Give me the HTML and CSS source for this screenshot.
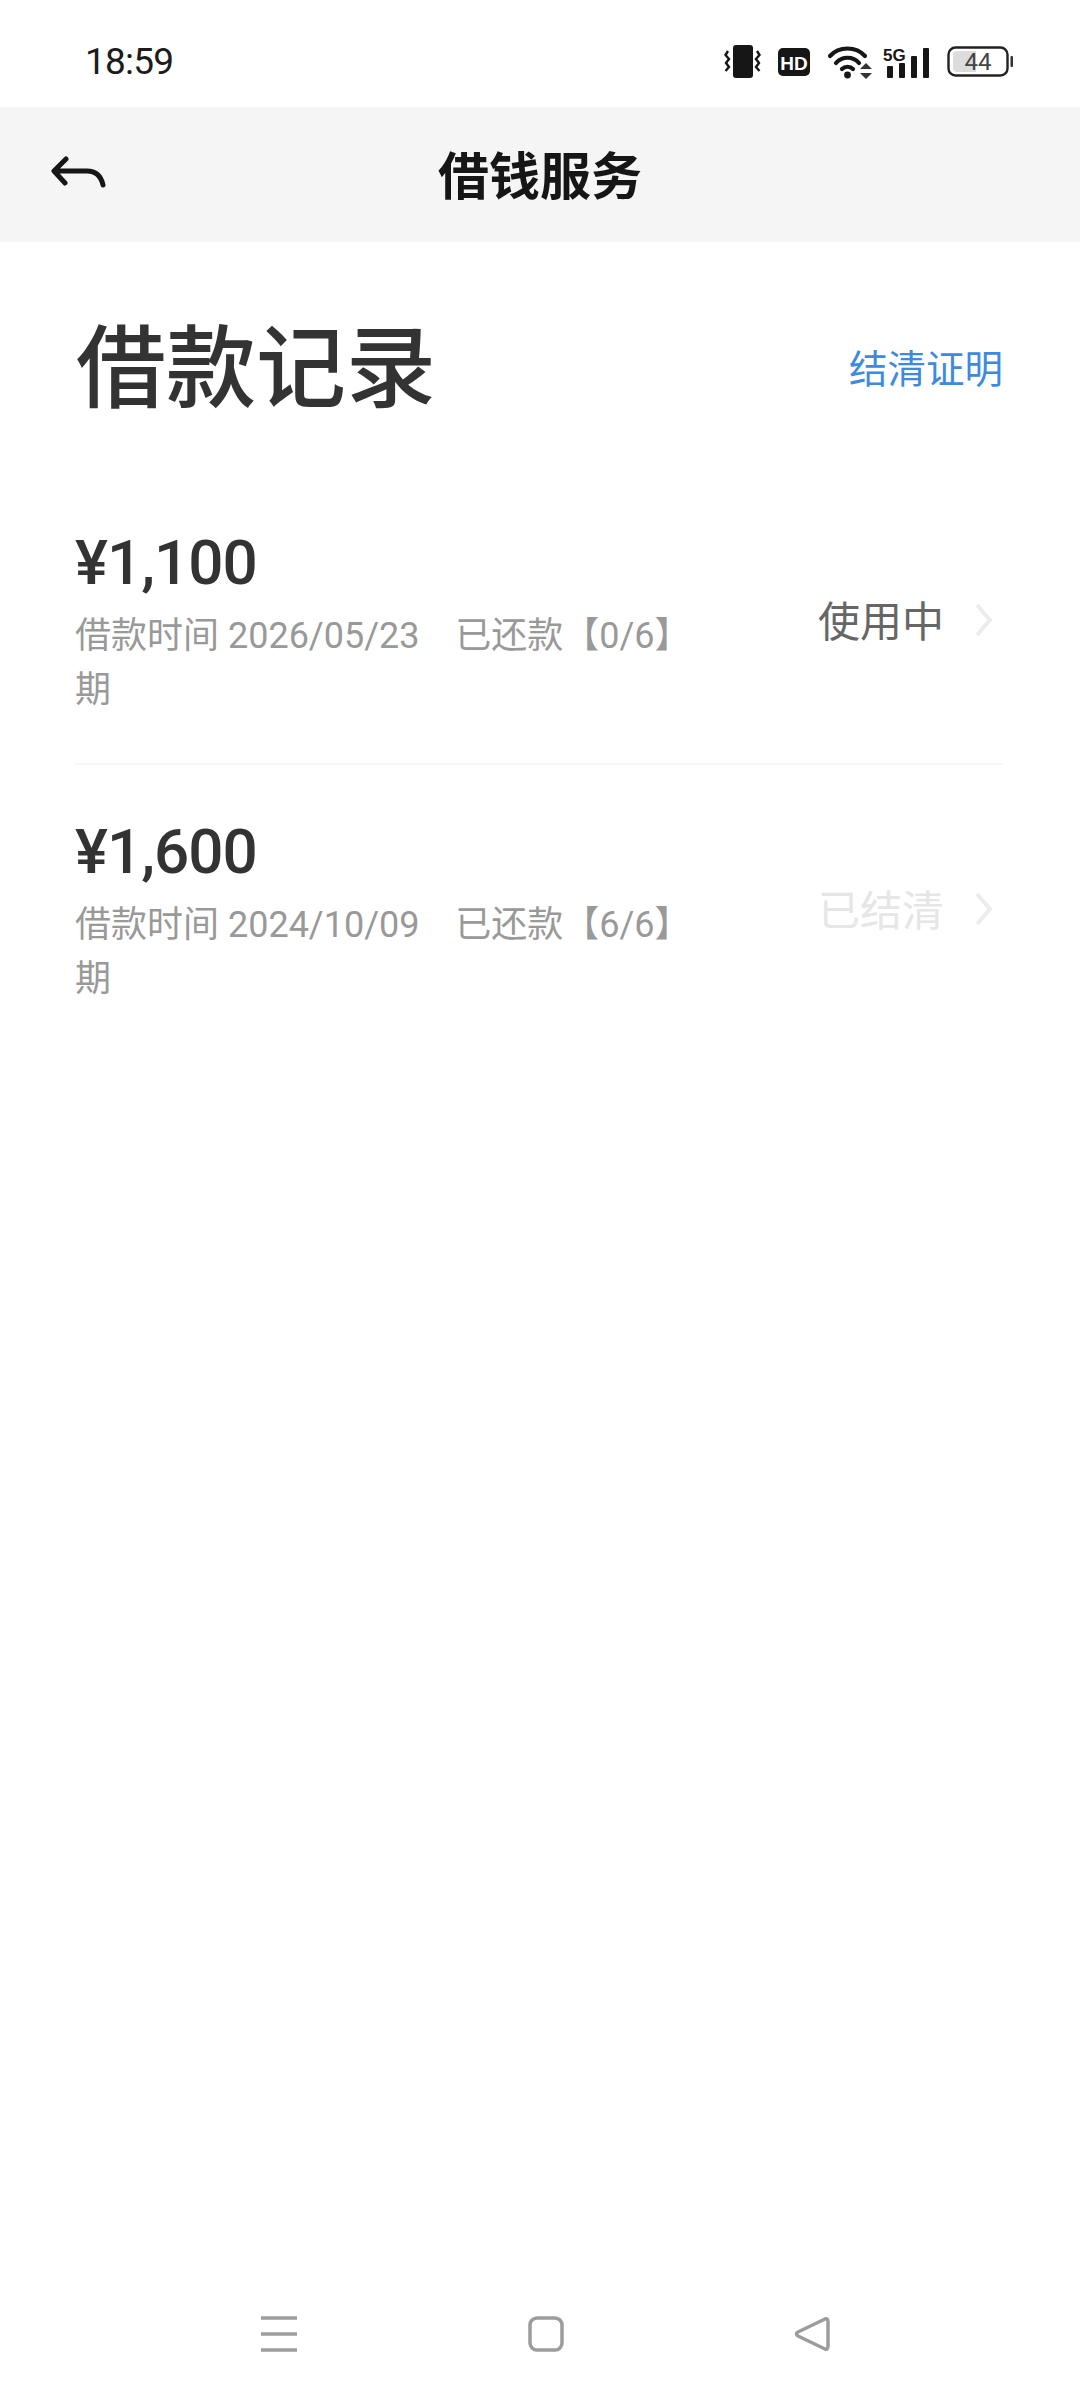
FILE: index.html
```html
<!DOCTYPE html>
<html lang="zh-CN">
<head>
<meta charset="utf-8">
<title>借款记录</title>
<link rel="stylesheet" href="styles.css">
</head>
<body>
<div class="page">
  <div class="status">
    <span class="time">18:59</span>
    <div class="status-icons">
      <svg class="ic-vib" width="37" height="34" viewBox="0 0 37 34"><rect x="9" y="0" width="20" height="33" rx="3" fill="#161616"/><path d="M4 6 L1.5 10 L5 14 L2 18 L5 22 L1.5 26 M33 6 L35.5 10 L32 14 L35 18 L32 22 L35.5 26" fill="none" stroke="#161616" stroke-width="2.4"/></svg>
      <svg class="ic-hd" width="32" height="28" viewBox="0 0 32 28"><rect width="32" height="28" rx="5" fill="#161616"/><text x="16" y="21.5" class="hd-text" text-anchor="middle">HD</text></svg>
      <svg class="ic-wifi" width="45" height="34" viewBox="0 0 45 34"><path d="M3 11 C12 1 29 1 38 11 M9 18 C15 11 26 11 32 18 M15 24 C18 21 23 21 26 24" fill="none" stroke="#161616" stroke-width="4.2" stroke-linecap="round"/><circle cx="20.5" cy="30" r="3.4" fill="#161616"/><path d="M33 24 L39 18 L45 24 Z M33 28 L45 28 L39 34 Z" fill="#333"/></svg>
      <svg class="ic-sig" width="47" height="32" viewBox="0 0 47 32"><text x="0" y="15" class="sig-text">5G</text><rect x="4" y="20" width="6" height="12" rx="1" fill="#161616"/><rect x="16" y="17" width="6" height="15" rx="1" fill="#161616"/><rect x="28" y="10" width="6" height="22" rx="1" fill="#161616"/><rect x="40" y="2" width="6" height="30" rx="1" fill="#161616"/></svg>
      <svg class="ic-bat" width="66" height="31" viewBox="0 0 66 31"><rect x="1.5" y="1.5" width="59" height="28" rx="7" fill="#fff" stroke="#222" stroke-width="2.4"/><path d="M6 9 a4 4 0 0 1 4 -4 H29 V26 H10 a4 4 0 0 1 -4 -4 Z" fill="#dcdcdc"/><rect x="63.5" y="10" width="2.5" height="11" rx="1" fill="#333"/><text x="31" y="24" class="bat-text" text-anchor="middle">44</text></svg>
    </div>
  </div>

  <header class="nav">
    <svg class="back" width="56" height="40" viewBox="0 0 56 40"><path d="M15 3 L3 15 L14 27 M4 15 H36 C45 15 50 20 52 29" fill="none" stroke="#161616" stroke-width="5" stroke-linecap="round" stroke-linejoin="round"/></svg>
    <h1 class="nav-title">借钱服务</h1>
  </header>

  <section class="heading">
    <h2 class="heading-title">借款记录</h2>
    <span class="heading-link">结清证明</span>
  </section>

  <ul class="records">
    <li class="record">
      <div class="record-main">
        <div class="amount">¥1,100</div>
        <p class="meta">借款时间 2026/05/23 &nbsp;&nbsp;&nbsp;已还款【0/6】期</p>
      </div>
      <span class="state state-active">使用中</span>
      <svg class="chev" width="18" height="34" viewBox="0 0 18 34"><path d="M2 2 L15 17 L2 32" fill="none" stroke="#ececec" stroke-width="4"/></svg>
    </li>
    <li class="record">
      <div class="record-main">
        <div class="amount">¥1,600</div>
        <p class="meta">借款时间 2024/10/09 &nbsp;&nbsp;&nbsp;已还款【6/6】期</p>
      </div>
      <span class="state state-done">已结清</span>
      <svg class="chev" width="18" height="34" viewBox="0 0 18 34"><path d="M2 2 L15 17 L2 32" fill="none" stroke="#ececec" stroke-width="4"/></svg>
    </li>
  </ul>

  <footer class="softkeys">
    <svg width="36" height="36" viewBox="0 0 36 36"><path d="M0 2 H36 M0 18 H36 M0 34 H36" stroke="#9c9c9c" stroke-width="3.5"/></svg>
    <svg width="36" height="36" viewBox="0 0 36 36"><rect x="2" y="2" width="32" height="32" rx="7" fill="none" stroke="#9c9c9c" stroke-width="3.5"/></svg>
    <svg width="36" height="36" viewBox="0 0 36 36"><path d="M31 3 Q34 2 34 6 V30 Q34 34 31 33 L4 20 Q1 18 4 16 Z" fill="none" stroke="#9c9c9c" stroke-width="3.5" stroke-linejoin="round"/></svg>
  </footer>
</div>
</body>
</html>
```
FILE: styles.css
```css
* { box-sizing: border-box; }
html, body { margin: 0; padding: 0; background: #fff; }
body { font-family: Roboto, "Noto Sans CJK SC", sans-serif; }
.page { width: 1080px; height: 2400px; display: flex; flex-direction: column; }

.status { height: 107px; display: flex; align-items: center; justify-content: space-between; padding: 15px 67px 0 85px; }
.time { font-size: 37px; letter-spacing: -0.8px; color: #1c1c1c; line-height: 1; }
.status-icons { display: flex; align-items: center; gap: 17px; padding-top: 1px; }
.ic-sig { margin-left: -6px; }
.hd-text { font: 700 19px "Liberation Sans", sans-serif; fill: #fff; }
.sig-text { font: 700 17px "Liberation Sans", sans-serif; fill: #161616; }
.bat-text { font: 400 24px Roboto, sans-serif; fill: #444; }

.nav { height: 135px; background: #f5f5f5; position: relative; display: flex; align-items: center; justify-content: center; padding-top: 5px; }
.back { position: absolute; left: 51px; top: 49px; }
.nav-title { margin: 0; font-size: 51px; font-weight: 700; color: #161616; line-height: 1; }

.heading { display: flex; justify-content: space-between; align-items: center; padding: 21px 77px 0 76px; height: 235px; }
.heading-title { margin: 0; font-size: 90px; font-weight: 500; color: #333; line-height: 100px; }
.heading-link { font-size: 38.5px; color: #3d8bdf; line-height: 1; }

.records { list-style: none; margin: 0; padding: 0 77px 0 75px; }
.record { height: 288px; display: flex; align-items: center; border-bottom: 2px solid #f6f6f6; }
.record:last-child { border-bottom: 0; }
.record-main { width: 640px; padding-top: 4px; }
.amount { font-size: 62px; font-weight: 500; letter-spacing: -1px; color: #333; line-height: 70px; }
.meta { margin: 11px 0 0; width: 640px; font-size: 36px; line-height: 54px; color: #999; }
.state { margin-left: auto; padding-top: 6px; font-size: 42px; line-height: 1; }
.state-active { color: #666; }
.state-done { color: #e6e6e6; }
.chev { margin: 0 10px 0 31px; }

.softkeys { margin-top: auto; height: 84px; padding: 0 250px 0 261px; display: flex; justify-content: space-between; align-items: flex-start; }
```
